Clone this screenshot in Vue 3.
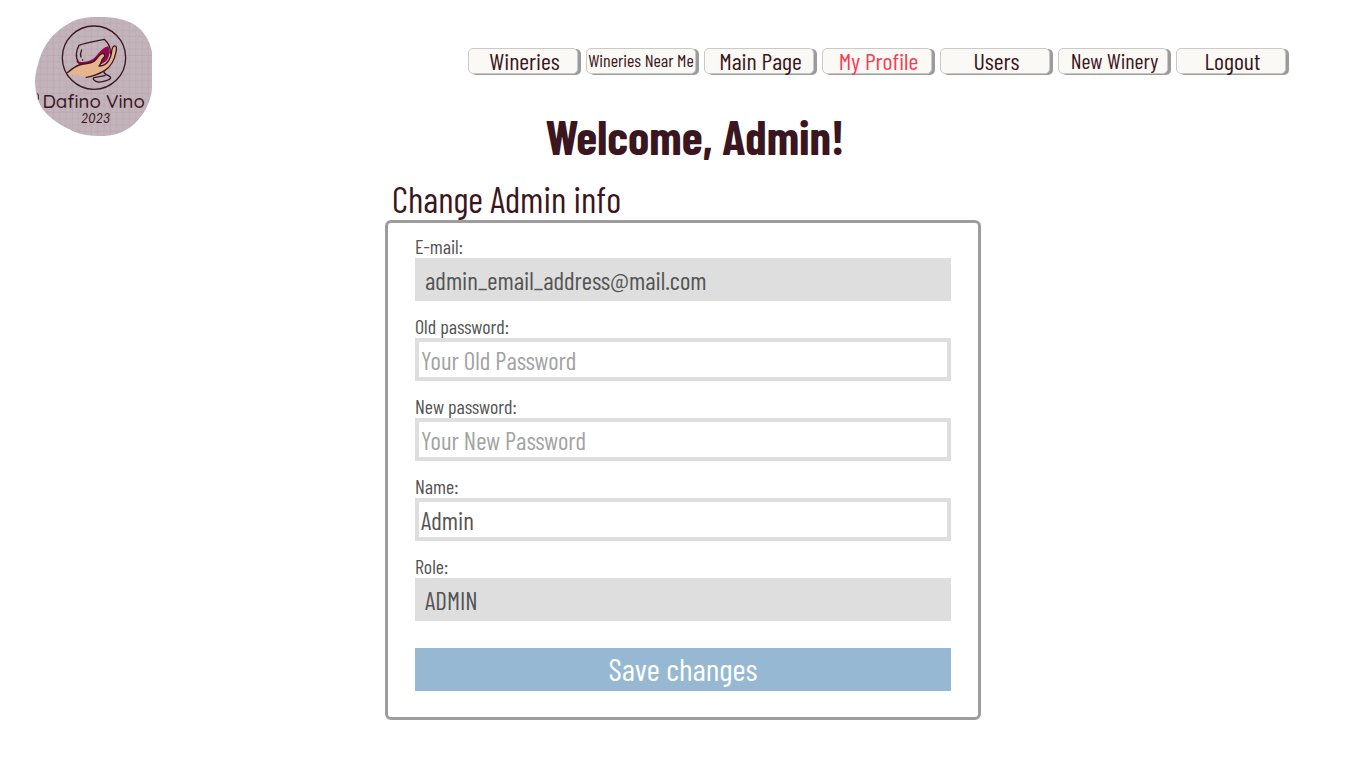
<script setup>
import { ref } from 'vue'

const links = [
  { label: 'Wineries', size: 'large' },
  { label: 'Wineries Near Me', size: 'small' },
  { label: 'Main Page', size: 'large' },
  { label: 'My Profile', size: 'large', active: true },
  { label: 'Users', size: 'large' },
  { label: 'New Winery', size: 'medium' },
  { label: 'Logout', size: 'large' }
]

const email = ref('admin_email_address@mail.com')
const oldPassword = ref('')
const newPassword = ref('')
const name = ref('Admin')
const role = ref('ADMIN')
</script>

<template>
  <div class="page">
    <header class="header">
      <a href="#" class="brand" aria-label="Dafino Vino">
        <svg class="logo" viewBox="30 27 354 360" fill="none" stroke-linecap="round" stroke-linejoin="round">
          <defs>
            <pattern id="cloth" width="19" height="19" patternUnits="userSpaceOnUse">
              <rect width="19" height="19" fill="#c3b3ba" />
              <path d="M0 9H19M9 0V19" stroke="#b8a7af" stroke-width="2" />
            </pattern>
          </defs>
          <path
            d="M232 27C208 26 180 28 158 34C128 46 100 65 80 87C60 110 48 136 40 165C34 184 30 204 30 222C31 252 37 282 55 306C78 336 112 355 148 371C185 386 240 388 278 377C318 364 345 334 363 302C374 282 381 258 381 235V132C376 104 362 79 343 61C315 36 276 28 232 27Z"
            fill="url(#cloth)"
          />
          <circle cx="207" cy="149" r="95" stroke="#3a1620" stroke-width="4" />
          <path d="M153 158C168 165 188 163 204 153C222 140 228 119 250 115C256 132 254 147 243 160L210 180L165 174Z" fill="#96074c" />
          <path d="M160 162C150 148 154 126 162 112C184 103 214 99 238 94C250 105 257 122 256 136M170 126C166 134 166 141 168 147M173 155V156" stroke="#3a1620" stroke-width="4" />
          <path d="M240 184C232 192 240 199 250 203C262 209 257 214 244 218C232 222 220 224 213 220C205 216 203 211 207 209L240 203" stroke="#3a1620" stroke-width="4" />
          <path
            d="M127 194C139 184 150 175 163 171C179 166 194 168 207 160C217 153 219 143 229 138C239 134 242 143 237 148C227 157 230 166 222 174C242 175 252 160 257 145C261 133 259 118 267 114C276 112 275 123 273 132C269 154 257 176 239 188C222 198 210 204 190 207C175 208 160 198 133 201Z"
            fill="#e8b48c"
          />
          <path
            d="M127 194C139 184 150 175 163 171C179 166 194 168 207 160C217 153 219 143 229 138C239 134 242 143 237 148C227 157 230 166 222 174C242 175 252 160 257 145C261 133 259 118 267 114C276 112 275 123 273 132C269 154 257 176 239 188C222 198 210 204 184 208"
            stroke="#3a1620"
            stroke-width="4"
          />
          <path d="M38 257C42 262 40 268 40 273" stroke="#3a1620" stroke-width="3" />
          <text x="206" y="300" class="logo-name">Dafino Vino</text>
          <text x="212" y="345" class="logo-year">2023</text>
        </svg>
      </a>
      <nav class="nav" aria-label="Main">
        <a
          v-for="link in links"
          :key="link.label"
          href="#"
          class="nav-link"
          :class="[link.size, { active: link.active }]"
        >{{ link.label }}</a>
      </nav>
    </header>

    <main class="main">
      <h1 class="title">Welcome, Admin!</h1>
      <h2 class="subtitle">Change Admin info</h2>
      <form class="card" @submit.prevent>
        <div class="field">
          <label for="email">E-mail:</label>
          <input id="email" v-model="email" type="text" class="locked" readonly />
        </div>
        <div class="field">
          <label for="old">Old password:</label>
          <input id="old" v-model="oldPassword" type="password" placeholder="Your Old Password" />
        </div>
        <div class="field">
          <label for="new">New password:</label>
          <input id="new" v-model="newPassword" type="password" placeholder="Your New Password" />
        </div>
        <div class="field">
          <label for="name">Name:</label>
          <input id="name" v-model="name" type="text" />
        </div>
        <div class="field">
          <label for="role">Role:</label>
          <input id="role" v-model="role" type="text" class="locked" readonly />
        </div>
        <button type="submit" class="save">Save changes</button>
      </form>
    </main>
  </div>
</template>

<style>
body {
  background: #fff;
}
</style>

<style scoped>
.page {
  font-family: "Barlow Condensed", "Roboto Condensed", "Liberation Sans Narrow", "Liberation Sans", sans-serif;
  color: #3a1620;
}
.page * {
  box-sizing: border-box;
}
.header {
  display: flex;
  justify-content: space-between;
  align-items: flex-start;
  height: 117px;
  padding: 17px 80px 0 35px;
}
.logo {
  display: block;
  width: 118px;
  height: 120px;
}
.logo-name {
  font: 500 56px Quicksand, Comfortaa, Lato, sans-serif;
  fill: #3a1620;
  text-anchor: middle;
}
.logo-year {
  font: italic 38px Lato, sans-serif;
  fill: #3a1620;
  text-anchor: middle;
}
.nav {
  display: flex;
  gap: 8px;
  padding-top: 31px;
}
.nav-link {
  display: flex;
  align-items: center;
  justify-content: center;
  width: 110px;
  height: 26px;
  padding: 0 0 2px;
  border: 1px solid #c9c9c7;
  border-radius: 5px;
  background: #faf9f5;
  box-shadow: 3px 1px 0 #9b9b9b;
  color: #3a1620;
  text-decoration: none;
  white-space: nowrap;
}
.large {
  padding-left: 3px;
  font-size: 24px;
}
.medium {
  padding-left: 3px;
  font-size: 22px;
}
.small {
  font-size: 18px;
}
.active {
  color: #f43f55;
}
.main {
  width: 596px;
  max-width: 100%;
  margin: 0 auto;
}
.title {
  margin: 0;
  padding-left: 24px;
  font-size: 48px;
  line-height: 38px;
  font-weight: 700;
  text-align: center;
  white-space: nowrap;
}
.subtitle {
  margin: 23px 0 0 7px;
  font-size: 36px;
  line-height: 42px;
  font-weight: 400;
}
.card {
  padding: 13px 27px 26px;
  border: 3px solid #9d9d9d;
  border-radius: 6px;
}
.field {
  display: flex;
  flex-direction: column;
  gap: 2px;
  margin-bottom: 15px;
}
.field label {
  font-size: 20px;
  line-height: 20px;
  color: #545454;
}
.field input {
  width: 100%;
  height: 43px;
  padding: 0 2px;
  border: 4px solid #dedede;
  border-radius: 0;
  outline: 0;
  background: #fff;
  color: #545454;
  font-family: inherit;
  font-size: 25px;
}
.field input::placeholder {
  color: #a3a3a3;
  opacity: 1;
}
.field .locked {
  padding: 0 6px;
  background: #dedede;
}
.save {
  display: block;
  width: 100%;
  height: 43px;
  margin-top: 27px;
  padding: 0 0 2px;
  border: 0;
  background: #96b8d3;
  color: #fff;
  font-family: inherit;
  font-size: 32px;
  line-height: 41px;
}
</style>
